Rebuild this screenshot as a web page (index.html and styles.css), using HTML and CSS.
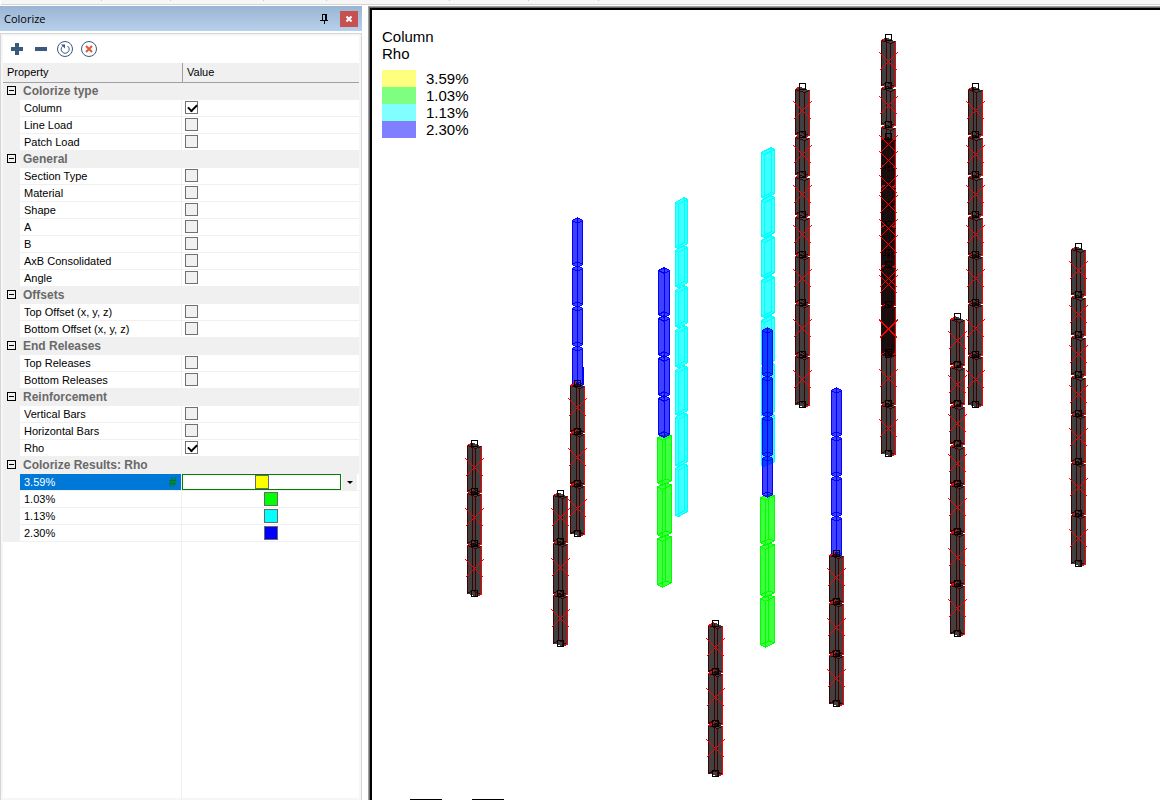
FILE: index.html
```html
<!DOCTYPE html>
<html lang="en">
<head>
    <meta charset="UTF-8">
    <meta name="viewport" content="width=device-width, initial-scale=1.0">
    <title>Colorize</title>
    <link rel="stylesheet" href="styles.css">
</head>
<body>
    <div class="ribbon-edge">
        <svg class="ribbon-marks" aria-hidden="true"><path d="M100.5 0v1M169.5 0v1M262.5 0v1M325.5 0v1M448.5 0v1M527.5 0v1M597.5 0v1"/></svg>
    </div>
    <div class="workspace">
        <aside class="panel">
            <div class="panel-title">
                <h1>Colorize</h1>
                <button class="pin-button" aria-label="Pin">
                    <svg width="8" height="10" viewBox="0 0 8 10"><path d="M2 .5h4M2.500 0v6M5 0v6M6 0v6M0 6.500h8M4 7v3"/></svg>
                </button>
                <button class="close-button" aria-label="Close">
                    <svg width="6" height="6" viewBox="0 0 6 6"><path d="M.5.5l5 5M5.500.5l-5 5"/></svg>
                </button>
            </div>
            <div class="panel-body">
                <div class="toolbar">
                    <button aria-label="Expand all"><svg width="18" height="18" viewBox="0 0 18 18"><path class="bar" d="M3 9h12M9 3v12"/></svg></button>
                    <button aria-label="Collapse all"><svg width="18" height="18" viewBox="0 0 18 18"><path class="bar" d="M3 9h12"/></svg></button>
                    <button aria-label="Refresh"><svg width="18" height="18" viewBox="0 0 18 18"><circle cx="9" cy="9" r="7.500"/><path d="M11.500 6a4 4 0 1 1-5 .3"/><path class="arrow" d="M5 4.500h4v4z"/></svg></button>
                    <button aria-label="Clear"><svg width="18" height="18" viewBox="0 0 18 18"><circle cx="9" cy="9" r="7.500"/><path class="cancel" d="M6 6l6 6M12 6l-6 6"/></svg></button>
                </div>
                <table class="grid">
                    <colgroup><col class="col-gutter"><col class="col-name"><col></colgroup>
                    <thead>
                        <tr><th colspan="2">Property</th><th>Value</th></tr>
                    </thead>
                    <tbody>
                        <tr class="group"><td><button class="toggle" aria-label="Collapse Colorize type"></button></td><th colspan="2">Colorize type</th></tr>
                        <tr><td></td><td><label for="column">Column</label></td><td><input type="checkbox" id="column" checked></td></tr>
                        <tr><td></td><td><label for="line-load">Line Load</label></td><td><input type="checkbox" id="line-load"></td></tr>
                        <tr><td></td><td><label for="patch-load">Patch Load</label></td><td><input type="checkbox" id="patch-load"></td></tr>
                    </tbody>
                    <tbody>
                        <tr class="group"><td><button class="toggle" aria-label="Collapse General"></button></td><th colspan="2">General</th></tr>
                        <tr><td></td><td><label for="section-type">Section Type</label></td><td><input type="checkbox" id="section-type"></td></tr>
                        <tr><td></td><td><label for="material">Material</label></td><td><input type="checkbox" id="material"></td></tr>
                        <tr><td></td><td><label for="shape">Shape</label></td><td><input type="checkbox" id="shape"></td></tr>
                        <tr><td></td><td><label for="dim-a">A</label></td><td><input type="checkbox" id="dim-a"></td></tr>
                        <tr><td></td><td><label for="dim-b">B</label></td><td><input type="checkbox" id="dim-b"></td></tr>
                        <tr><td></td><td><label for="axb">AxB Consolidated</label></td><td><input type="checkbox" id="axb"></td></tr>
                        <tr><td></td><td><label for="angle">Angle</label></td><td><input type="checkbox" id="angle"></td></tr>
                    </tbody>
                    <tbody>
                        <tr class="group"><td><button class="toggle" aria-label="Collapse Offsets"></button></td><th colspan="2">Offsets</th></tr>
                        <tr><td></td><td><label for="top-offset">Top Offset (x, y, z)</label></td><td><input type="checkbox" id="top-offset"></td></tr>
                        <tr><td></td><td><label for="bottom-offset">Bottom Offset (x, y, z)</label></td><td><input type="checkbox" id="bottom-offset"></td></tr>
                    </tbody>
                    <tbody>
                        <tr class="group"><td><button class="toggle" aria-label="Collapse End Releases"></button></td><th colspan="2">End Releases</th></tr>
                        <tr><td></td><td><label for="top-releases">Top Releases</label></td><td><input type="checkbox" id="top-releases"></td></tr>
                        <tr><td></td><td><label for="bottom-releases">Bottom Releases</label></td><td><input type="checkbox" id="bottom-releases"></td></tr>
                    </tbody>
                    <tbody>
                        <tr class="group"><td><button class="toggle" aria-label="Collapse Reinforcement"></button></td><th colspan="2">Reinforcement</th></tr>
                        <tr><td></td><td><label for="vertical-bars">Vertical Bars</label></td><td><input type="checkbox" id="vertical-bars"></td></tr>
                        <tr><td></td><td><label for="horizontal-bars">Horizontal Bars</label></td><td><input type="checkbox" id="horizontal-bars"></td></tr>
                        <tr><td></td><td><label for="rho">Rho</label></td><td><input type="checkbox" id="rho" checked></td></tr>
                    </tbody>
                    <tbody>
                        <tr class="group"><td><button class="toggle" aria-label="Collapse Colorize Results"></button></td><th colspan="2">Colorize Results: Rho</th></tr>
                        <tr class="selected"><td></td><td><div class="name">3.59%<b>#</b></div></td><td>
                            <div class="editor">
                                <div class="editor-value"><span class="swatch yellow"></span></div>
                                <button class="drop-button" aria-label="Choose color for 3.59%"></button>
                            </div>
                        </td></tr>
                        <tr><td></td><td>1.03%</td><td><span class="swatch green"></span></td></tr>
                        <tr><td></td><td>1.13%</td><td><span class="swatch cyan"></span></td></tr>
                        <tr><td></td><td>2.30%</td><td><span class="swatch blue"></span></td></tr>
                    </tbody>
                </table>
                <div class="grid-rest"></div>
            </div>
        </aside>
        <main class="viewport">
            <svg id="model" class="model" role="img" aria-label="Columns colored by Rho"></svg>
            <div class="legend">
                <p>Column</p>
                <p>Rho</p>
                <ul>
                    <li><span class="key yellow"></span>3.59%</li>
                    <li><span class="key green"></span>1.03%</li>
                    <li><span class="key cyan"></span>1.13%</li>
                    <li><span class="key blue"></span>2.30%</li>
                </ul>
            </div>
        </main>
    </div>
    <script src="model.js"></script>
</body>
</html>
```

FILE: styles.css
```css
* {
    box-sizing: border-box;
}
body {
    margin: 0;
    height: 100vh;
    overflow: hidden;
    display: flex;
    flex-direction: column;
    background-color: #ffffff;
    color: #000000;
    font-family: "Liberation Sans", Arial, sans-serif;
    font-size: 11px;
}
button {
    padding: 0;
    border: none;
    background: none;
}
.ribbon-edge {
    flex: none;
    height: 5px;
    background-color: #f6f6f6;
    border-bottom: 1px solid #d5d5d5;
    margin-left: 1px;
}
.ribbon-marks {
    display: block;
    width: 100%;
    height: 4px;
    stroke: #cccccc;
}
.workspace {
    flex: 1;
    min-height: 0;
    display: flex;
    gap: 6px;
    padding-top: 1px;
}

/* Side panel */
.panel {
    flex: none;
    width: 362px;
    display: flex;
    flex-direction: column;
    gap: 2px;
}
.panel-title {
    display: flex;
    align-items: center;
    gap: 12px;
    height: 25px;
    padding: 0 4px;
    background: linear-gradient(#9ab5d3, #b7d0eb);
}
.panel-title h1 {
    flex: 1;
    margin: 0;
    font: 11px "Open Sans", sans-serif;
}
.pin-button svg {
    display: block;
    fill: none;
    stroke: #000000;
    shape-rendering: crispEdges;
}
.close-button {
    display: flex;
    align-items: center;
    justify-content: center;
    width: 18px;
    height: 16px;
    background-color: #c75050;
}
.close-button svg {
    stroke: #ffffff;
    stroke-width: 2;
}
.panel-body {
    flex: 1;
    min-height: 0;
    display: flex;
    flex-direction: column;
    padding: 2px 2px 0;
    border: 1px solid #d5d5d5;
    border-bottom: none;
    box-shadow: inset 0 0 0 2px #f6f6f6;
}
.toolbar {
    display: flex;
    align-items: center;
    gap: 6px;
    height: 27px;
    padding: 0 0 2px 5px;
    background-color: #ffffff;
}
.toolbar svg {
    display: block;
    fill: none;
    stroke: #39597d;
}
.toolbar .bar {
    stroke-width: 4;
}
.toolbar .arrow {
    fill: #39597d;
    stroke: none;
}
.toolbar .cancel {
    stroke: #e05a33;
    stroke-width: 2;
}

/* Property grid */
.grid {
    width: 100%;
    table-layout: fixed;
    border-collapse: separate;
    border-spacing: 0;
}
.col-gutter {
    width: 17px;
}
.col-name {
    width: 162px;
}
.grid td,
.grid th {
    height: 17px;
    padding: 0 3px;
    text-align: left;
    vertical-align: top;
    line-height: 16px;
    font-weight: normal;
    white-space: nowrap;
}
.grid thead th {
    height: 20px;
    padding-left: 4px;
    line-height: 19px;
    background-color: #f0f0f0;
    border-bottom: 1px solid #a0a0a0;
}
.grid thead th + th {
    border-left: 1px solid #a0a0a0;
}
.grid tbody td {
    border-bottom: 1px solid #f0f0f0;
}
.grid td:first-child {
    background-color: #f0f0f0;
}
.grid td:nth-child(2) {
    padding-left: 4px;
    border-right: 1px solid #f0f0f0;
}
.grid tbody th {
    background-color: #f0f0f0;
    color: #696969;
    font-size: 12px;
    font-weight: bold;
}
.grid label {
    display: block;
}
.toggle {
    display: block;
    width: 9px;
    height: 9px;
    margin: 3px 0 0 1px;
    border: 1px solid #000000;
    background: linear-gradient(#000000, #000000) center / 5px 1px no-repeat;
}
.grid input {
    appearance: none;
    display: block;
    width: 13px;
    height: 13px;
    margin: 1px 0 0;
    border: 1px solid #707070;
    background-color: #f0f0f0;
}
.grid input:checked {
    background: #ffffff;
}
.grid input:checked::before {
    content: "";
    display: block;
    width: 7px;
    height: 4px;
    margin: 2px;
    border-left: 2px solid #000000;
    border-bottom: 2px solid #000000;
    transform: rotate(-45deg);
}
.swatch {
    display: block;
    width: 14px;
    height: 14px;
    margin: 1px auto 0;
    border: 1px solid #696969;
}
.yellow {
    background-color: #ffff00;
}
.green {
    background-color: #00ff00;
}
.cyan {
    background-color: #00ffff;
}
.blue {
    background-color: #0000ff;
}
.grid .selected td:nth-child(2) {
    background-color: #0078d7;
    color: #ffffff;
}
.grid .selected td:last-child {
    padding: 0 2px 0 0;
}
.name {
    display: flex;
    justify-content: space-between;
    padding-right: 1px;
}
.name b {
    color: #008000;
    font-size: 14px;
}
.editor {
    display: flex;
    gap: 1px;
}
.editor-value {
    flex: 1;
    height: 16px;
    border: 1px solid #008000;
}
.editor-value .swatch {
    margin-top: 0;
}
.drop-button {
    display: flex;
    align-items: center;
    justify-content: center;
    width: 15px;
    background-color: #f0f0f0;
}
.drop-button::before {
    content: "";
    border: 3px solid transparent;
    border-top-color: #000000;
    border-bottom: none;
}
.grid-rest {
    flex: 1;
    width: 179px;
    border-right: 1px solid #f0f0f0;
}

/* Model view */
.viewport {
    flex: 1;
    min-width: 0;
    position: relative;
    overflow: hidden;
    border-top: 2px solid #000000;
    border-left: 2px solid #000000;
    margin: 2px 0 0 2px;
    box-shadow: 0 0 0 1px #696969, 0 0 0 2px #a0a0a0;
}
.model {
    display: block;
    width: 100%;
    height: 100%;
    shape-rendering: crispEdges;
}
.legend {
    position: absolute;
    top: 18px;
    left: 10px;
    font-size: 15px;
    line-height: 17px;
}
.legend p {
    margin: 0;
}
.legend ul {
    margin: 8px 0 0;
    padding: 0;
    list-style: none;
}
.legend li {
    display: flex;
    gap: 10px;
}
.key {
    width: 34px;
    opacity: 0.5;
}
.body-fill {
    fill-opacity: 0.75;
    stroke: none;
}
.outline {
    fill: none;
}
.edge {
    fill: none;
    stroke: #ff0000;
}
.hidden-edge {
    fill: none;
    stroke: #400000;
}
.node {
    fill: none;
    stroke: #000000;
}
.ruler {
    stroke: #000000;
    stroke-width: 2;
}
```

FILE: model.js
```js
const model = document.getElementById('model');

// Storey levels, measured down from the top node
const inner = [0, 48, 88, 128, 168, 216, 268, 318];
const front = [0, 48, 88, 128, 168, 216, 267, 317];
const outer = [0, 48, 88, 128, 167, 215, 267, 317];
const corner = [0, 48, 87, 127, 167, 215, 267, 317];
const short = [0, 48, 100, 150];

// Crosses are collected here and drawn over all the columns
let crosses = '';

function add(name, className, attrs) {
    const el = document.createElementNS('http://www.w3.org/2000/svg', name);
    el.setAttribute('class', className);
    for (const key in attrs) el.setAttribute(key, attrs[key]);
    model.appendChild(el);
}

// One box: left and right sides, back and front edge, height of the right side
// against the left one
function drawBox(x1, x2, back, front, top, bottom, slant, color) {
    const low = bottom + 3;
    const d = `M${x1} ${top}L${back} ${top - 3}L${x2} ${top + slant}V${bottom + slant}L${front} ${low}L${x1} ${bottom}Z`;
    const rims = `M${x1} ${top}L${front} ${top + 3}L${x2} ${top + slant}M${x1} ${bottom}L${back} ${bottom - 3}L${x2} ${bottom + slant}`;
    const lines = `M${back} ${top - 3}V${bottom - 3}M${front} ${top + 3}V${low}`;
    add('path', 'body-fill', { d: d, fill: color });
    return { d: d, inner: rims + lines };
}

// Box with a sloping cap, lower on the left
function drawSloped(x1, x2, back, front, top, bottom, color) {
    const d = `M${x1} ${top}L${back} ${top - 5}L${x2} ${top - 3}V${bottom - 4}L${front} ${bottom + 1}L${x1} ${bottom}Z`;
    const rims = `M${x1} ${top}L${front} ${top + 2}L${x2} ${top - 3}M${x1} ${bottom}L${back} ${bottom - 5}L${x2} ${bottom - 4}`;
    const lines = `M${back} ${top - 5}V${bottom - 5}M${front} ${top + 2}V${bottom + 1}`;
    add('path', 'body-fill', { d: d, fill: color });
    add('path', 'outline', { d: d + rims + lines, stroke: color });
}

function drawColored(color, x1, x2, back, front, slant, segments) {
    segments.forEach(([top, bottom]) => {
        const box = drawBox(x1, x2, back, front, top, bottom, slant, color);
        add('path', 'outline', { d: box.d + box.inner, stroke: color });
    });
}

function drawFailed(x, y, back, front, levels) {
    const x1 = x - 7;
    const x2 = x + 7;
    const count = levels.length - 1;
    for (let i = 0; i < count; i++) {
        // the three lowest storeys stand closer together
        const top = y + levels[i] + (count - i <= 3 ? 2 : 3);
        const bottom = y + levels[i + 1];
        const mid = y + Math.ceil((levels[i] + levels[i + 1]) / 2);
        const box = drawBox(x1, x2, x + back, x + front, top, bottom, 1, '#000000');
        add('path', 'hidden-edge', { d: box.inner + `M${x1} ${top}V${bottom}` });
        add('path', 'edge', { d: `M${x1} ${top}L${x + back} ${top - 3}M${x2} ${top + 1}V${bottom + 1}L${x + front} ${bottom + 3}` });
        crosses += `M${x - 9} ${mid - 9}l18 18M${x + 9} ${mid - 9}l-18 18`;
    }
    levels.forEach(level => add('rect', 'node', { x: x - 3, y: y + level - 3, width: 6, height: 6 }));
}

const blue = y => [[y, y + 44], [y + 48, y + 84], [y + 88, y + 124], [y + 128, y + 164]];
const green = y => [[y, y + 45], [y + 49, y + 97], [y + 101, y + 147]];
const cyan = y => [[y, y + 45], [y + 48, y + 84], [y + 88, y + 124], [y + 128, y + 164], [y + 168, y + 212], [y + 215, y + 263], [y + 266, y + 313]];

cyan(192.5).forEach(([top, bottom]) => drawSloped(303.5, 315.5, 312.5, 306.5, top, bottom, '#00ffff'));
cyan(142.5).forEach(([top, bottom]) => drawSloped(389.5, 402.5, 399.5, 392.5, top, bottom, '#00ffff'));
drawColored('#00ff00', 285.5, 299.5, 293.5, 290.5, -2, green(427.5));
drawColored('#00ff00', 388.5, 402.5, 396.5, 393.5, -2, green(487.5));
drawColored('#0000ff', 200.5, 210.5, 205.5, 205.5, 0, blue(210.5));
drawColored('#0000ff', 286.5, 297.5, 292.5, 292.5, 0, blue(260.5));
drawColored('#0000ff', 390.5, 400.5, 395.5, 395.5, 0, blue(320.5));
drawColored('#0000ff', 459.5, 469.5, 464.5, 464.5, 0, blue(380.5));
add('path', 'outline', { d: 'M211.5 357v18', stroke: '#0000ff' });

drawFailed(102.5, 433.5, -2, 1, short);
drawFailed(205.5, 373.5, -1, 2, short);
drawFailed(188.5, 483.5, -2, 2, short);
drawFailed(343.5, 613.5, -1, 2, short);
drawFailed(464.5, 543.5, -1, 2, short);
drawFailed(430.5, 76.5, -3, 2, inner);
drawFailed(516.5, 27.5, -2, 2, corner);
drawFailed(516.5, 126.5, -2, 2, front);
drawFailed(603.5, 76.5, -2, 1, inner);
drawFailed(585.5, 306.5, -1, 2, corner);
drawFailed(706.5, 236.5, -2, 2, outer);
add('path', 'edge', { d: crosses });

add('path', 'ruler', { d: 'M38 790h32M100 790h32' });
```
